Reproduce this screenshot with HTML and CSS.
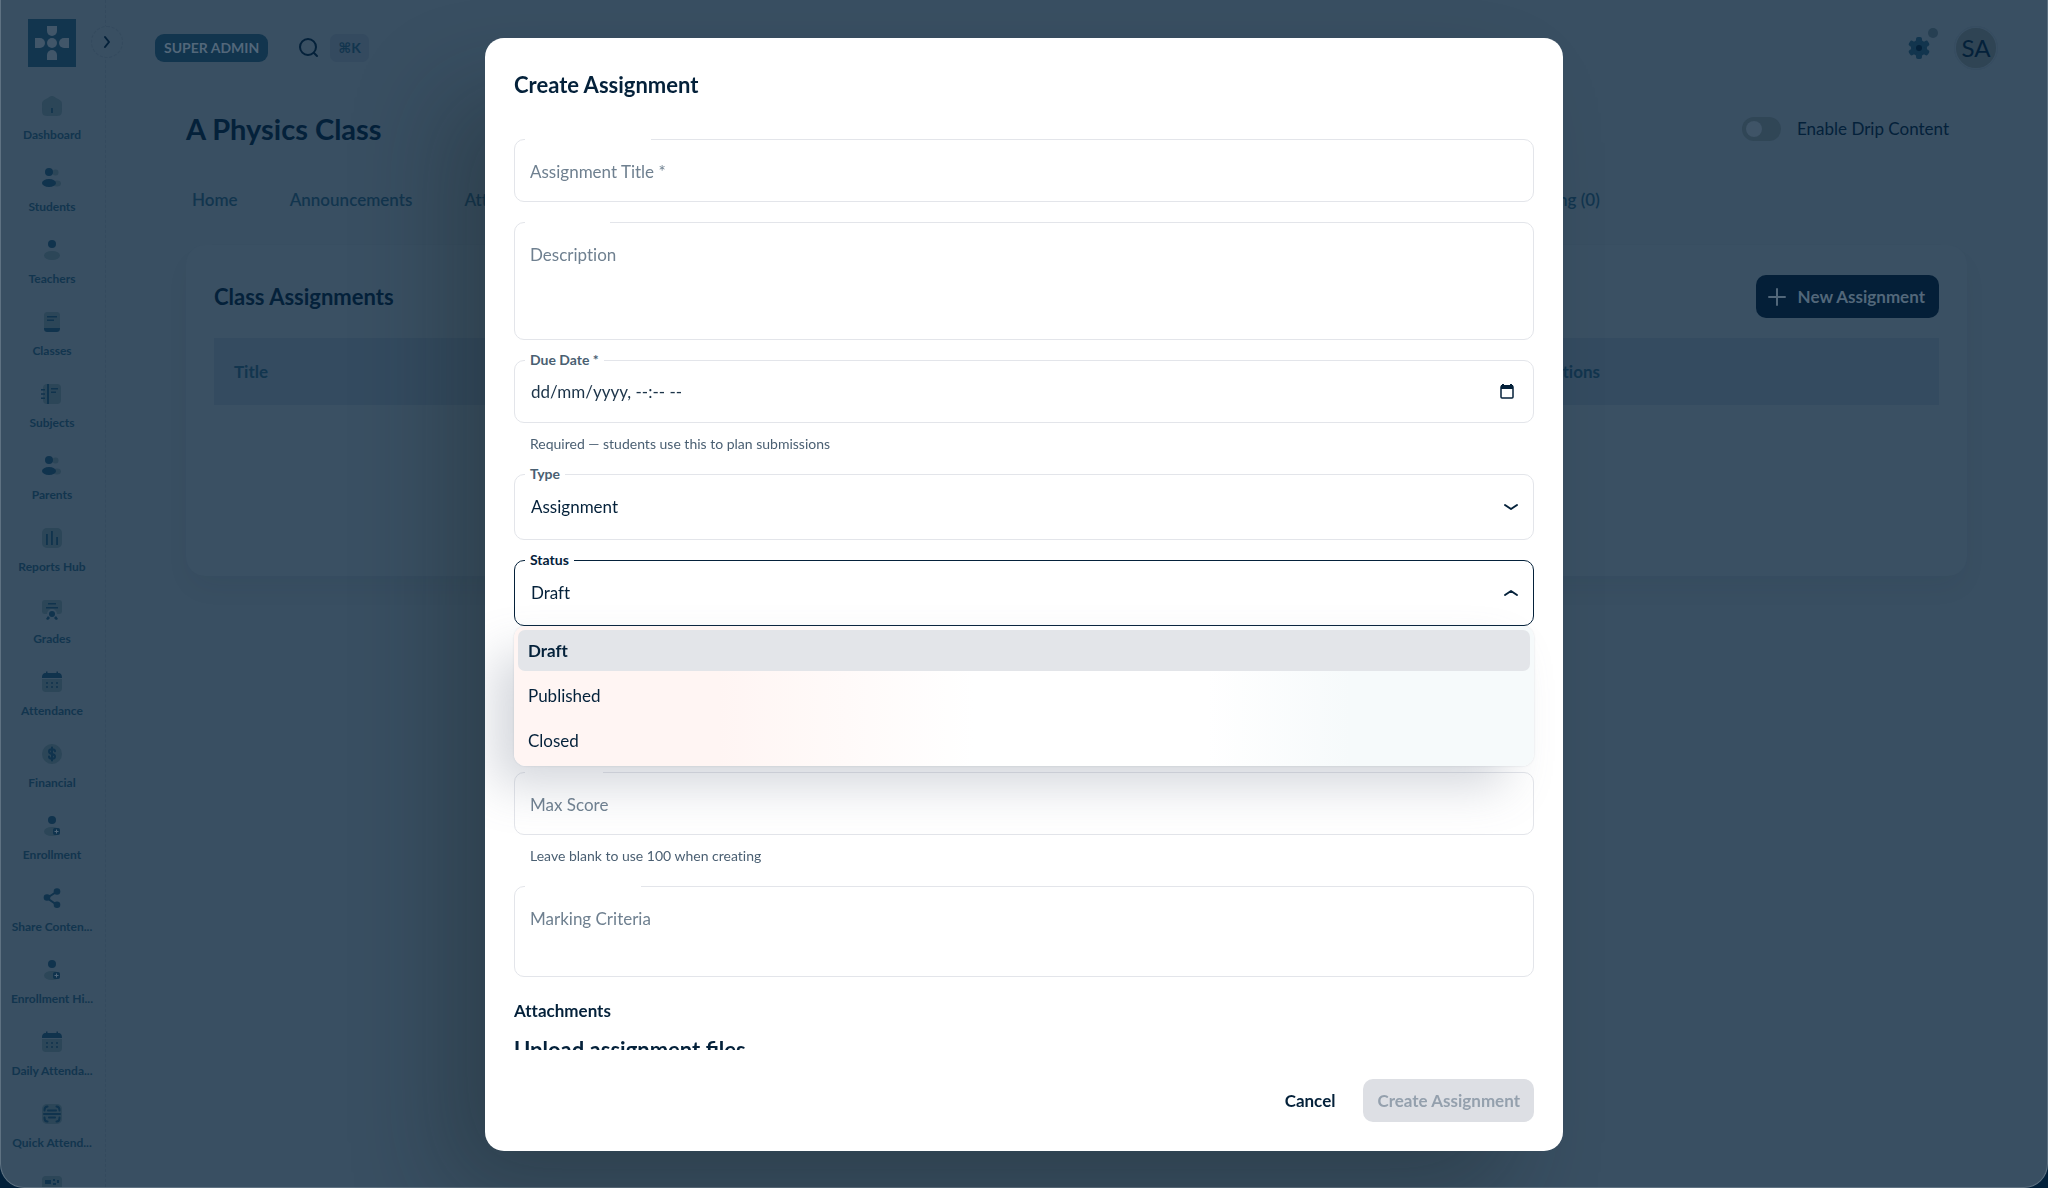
FILE: index.html
```html
<!DOCTYPE html>
<html lang="en">
<head>
    <meta charset="UTF-8">
    <meta name="viewport" content="width=device-width, initial-scale=1.0">
    <title>A Physics Class</title>
    <link rel="stylesheet" href="styles.css">
</head>
<body>
    <div class="app">
        <!-- Sidebar -->
        <aside class="sidebar">
            <a class="logo" href="#" aria-label="Home page">
                <svg viewBox="0 0 48 48" width="48" height="48">
                    <rect width="48" height="48" fill="#12354e"/>
                    <g fill="#415669">
                        <circle cx="24" cy="24" r="5"/>
                        <path d="M19 7h10v5a5 5 0 0 1-10 0z"/>
                        <path d="M19 41h10v-5a5 5 0 0 0-10 0z"/>
                        <path d="M7 19h5a5 5 0 0 1 0 10H7z"/>
                        <path d="M41 19h-5a5 5 0 0 0 0 10h5z"/>
                    </g>
                </svg>
            </a>
            <button class="collapse" type="button" aria-label="Expand sidebar">
                <svg viewBox="0 0 16 16" width="16" height="16"><path d="M6 3l4 5-4 5" fill="none" stroke="#04213a" stroke-width="2" stroke-linecap="round" stroke-linejoin="round"/></svg>
            </button>
            <nav class="side-nav">
                <a href="#"><svg viewBox="0 0 24 24"><path class="soft" d="M2 12.2c0-2.3 0-3.4.5-4.4.5-.9 1.5-1.500 3.400-2.700l2-1.200C9.900 2.600 10.900 2 12 2s2.100.6 4.100 1.900l2 1.200c1.900 1.200 2.900 1.800 3.400 2.700.5 1 .5 2.100.5 4.400v1.500c0 3.900 0 5.900-1.200 7.100C19.700 22 17.800 22 14 22h-4c-3.800 0-5.700 0-6.800-1.200C2 19.600 2 17.600 2 13.700z"/><path class="solid" d="M11.200 14h1.600v5h-1.600z"/></svg><span>Dashboard</span></a>
                <a href="#"><svg viewBox="0 0 24 24"><circle class="soft" cx="15.500" cy="6.500" r="3"/><ellipse class="soft" cx="17" cy="17.500" rx="4" ry="3"/><circle class="solid" cx="9" cy="6" r="4"/><ellipse class="solid" cx="9" cy="17" rx="7" ry="4"/></svg><span>Students</span></a>
                <a href="#"><svg viewBox="0 0 24 24"><circle class="solid" cx="12" cy="6" r="4"/><ellipse class="soft" cx="12" cy="17.500" rx="8" ry="4.500"/></svg><span>Teachers</span></a>
                <a href="#"><svg viewBox="0 0 24 24"><path class="soft" d="M8 2h8c3 0 4 1 4 4v12H4V6c0-3 1-4 4-4z"/><path class="solid" d="M7 6h10v1.500H7zM7 9.500h7V11H7zM4 18h16c0 3-1 4-4 4H8c-3 0-4-1-4-4z"/></svg><span>Classes</span></a>
                <a href="#"><svg viewBox="0 0 24 24"><path class="soft" d="M9 2h7c4 0 5 1 5 5v10c0 4-1 5-5 5H9z"/><path class="soft" d="M3 6c0-3 2-4 4-4v20c-2 0-4-1-4-4z"/><path class="solid" d="M7 2h2v20H7zM1 7h4v1.500H1zM1 11.300h4v1.500H1zM1 15.600h4v1.500H1zM11 6h7v1.500h-7zM11 9.500h5V11h-5z"/></svg><span>Subjects</span></a>
                <a href="#"><svg viewBox="0 0 24 24"><circle class="soft" cx="15.500" cy="6.500" r="3"/><ellipse class="soft" cx="17" cy="17.500" rx="4" ry="3"/><circle class="solid" cx="9" cy="6" r="4"/><ellipse class="solid" cx="9" cy="17" rx="7" ry="4"/></svg><span>Parents</span></a>
                <a href="#"><svg viewBox="0 0 24 24"><rect class="soft" x="2" y="2" width="20" height="20" rx="5"/><path class="solid" d="M6 8h1.800v11H6zM11 5h1.800v14H11zM16.200 11H18v8h-1.800z"/></svg><span>Reports Hub</span></a>
                <a href="#"><svg viewBox="0 0 24 24"><path class="soft" d="M5 2h14c2 0 3 1 3 3v8c0 2-1 3-3 3h-2a5 5 0 0 0-10 0H5c-2 0-3-1-3-3V5c0-2 1-3 3-3z"/><path class="solid" d="M8 5h8v1.500H8zM6 9h12v1.500H6z"/><circle class="solid" cx="12" cy="16" r="3"/><path class="solid" d="M8 18l2 2-2 2-2-1zM16 18l-2 2 2 2 2-1z"/></svg><span>Grades</span></a>
                <a href="#"><svg viewBox="0 0 24 24"><path class="soft" d="M2 9h20v8c0 4-1 5-5 5H7c-4 0-5-1-5-5z"/><path class="solid" d="M6 1.500h1.500V3h9V1.500H18V3c3 0 4 1.500 4 5H2c0-3.500 1-5 4-5z"/><g class="solid"><circle cx="7" cy="13" r="1"/><circle cx="12" cy="13" r="1"/><circle cx="17" cy="13" r="1"/><circle cx="7" cy="17" r="1"/><circle cx="12" cy="17" r="1"/><circle cx="17" cy="17" r="1"/></g></svg><span>Attendance</span></a>
                <a href="#"><svg viewBox="0 0 24 24"><circle class="soft" cx="12" cy="12" r="10"/><path class="line" d="M12 5.500v13M15 9.300C15 8 13.700 7.300 12 7.300S9 8 9 9.500s1 2 3 2.500 3 1 3 2.500-1.300 2.300-3 2.300-3-.8-3-2.300"/></svg><span>Financial</span></a>
                <a href="#"><svg viewBox="0 0 24 24"><circle class="solid" cx="12" cy="6" r="4"/><ellipse class="soft" cx="12" cy="17.500" rx="8" ry="4.500"/><rect class="solid" x="13" y="14" width="7" height="7" rx="2"/><path class="plus" d="M16.500 15.500v4M14.500 17.500h4"/></svg><span>Enrollment</span></a>
                <a href="#"><svg viewBox="0 0 24 24"><path class="line" d="M17 5.500L7 12l10 7"/><circle class="solid" cx="17" cy="5.500" r="3.300"/><circle class="solid" cx="7" cy="11.500" r="3.300"/><circle class="solid" cx="17" cy="18.800" r="3.300"/></svg><span>Share Conten...</span></a>
                <a href="#"><svg viewBox="0 0 24 24"><circle class="solid" cx="12" cy="6" r="4"/><ellipse class="soft" cx="12" cy="17.500" rx="8" ry="4.500"/><rect class="solid" x="13" y="14" width="7" height="7" rx="2"/><path class="plus" d="M16.500 15.500v4M14.500 17.500h4"/></svg><span>Enrollment Hi...</span></a>
                <a href="#"><svg viewBox="0 0 24 24"><path class="soft" d="M2 9h20v8c0 4-1 5-5 5H7c-4 0-5-1-5-5z"/><path class="solid" d="M6 1.500h1.500V3h9V1.500H18V3c3 0 4 1.500 4 5H2c0-3.500 1-5 4-5z"/><g class="solid"><circle cx="7" cy="13" r="1"/><circle cx="12" cy="13" r="1"/><circle cx="17" cy="13" r="1"/><circle cx="7" cy="17" r="1"/><circle cx="12" cy="17" r="1"/><circle cx="17" cy="17" r="1"/></g></svg><span>Daily Attenda...</span></a>
                <a href="#"><svg viewBox="0 0 24 24"><rect class="soft" x="2" y="2" width="20" height="20" rx="5"/><path class="line" d="M4 12h16M4.500 8.500V8c0-2 1-3.500 3-3.500M19.500 8.500V8c0-2-1-3.500-3-3.500M4.500 15.500v.5c0 2 1 3.500 3 3.500M19.500 15.500v.5c0 2-1 3.500-3 3.500M8 8.500h8M9 15.500h6"/></svg><span>Quick Attend...</span></a>
                <a href="#" aria-label="More"><svg viewBox="0 0 24 24"><rect class="soft" x="2" y="2" width="20" height="20" rx="4"/><path class="solid" d="M5 6h6v4H5zM13 5h2v2h-2zM17 6h2v3h-2zM13 9h3v2h-3z"/></svg></a>
            </nav>
        </aside>

        <div class="page">
            <header class="topbar">
                <span class="role">SUPER ADMIN</span>
                <button class="search" type="button">
                    <svg viewBox="0 0 24 24" width="24" height="24"><g fill="none" stroke="#04213a" stroke-width="2" stroke-linecap="round"><circle cx="11" cy="11" r="8"/><path d="M17 17l3 3"/></g></svg>
                    <kbd>⌘K</kbd>
                </button>
                <button class="settings" type="button" aria-label="Settings">
                    <svg viewBox="0 0 24 24" width="24" height="24"><g fill="#12354e"><circle cx="12" cy="12" r="8"/><rect x="9" y="1" width="6" height="22" rx="2"/><rect x="9" y="1" width="6" height="22" rx="2" transform="rotate(60 12 12)"/><rect x="9" y="1" width="6" height="22" rx="2" transform="rotate(120 12 12)"/></g><circle cx="12" cy="12" r="3" fill="#04213a"/></svg>
                    <i class="dot"></i>
                </button>
                <button class="avatar" type="button">SA</button>
            </header>

            <main>
                <div class="heading">
                    <h1>A Physics Class</h1>
                    <label class="drip"><input type="checkbox">Enable Drip Content</label>
                </div>

                <nav class="tabs">
                    <a href="#">Home</a>
                    <a href="#">Announcements</a>
                    <a href="#">Attendance</a>
                    <a href="#">Marking (0)</a>
                </nav>

                <section class="card">
                    <div class="card-head">
                        <h2>Class Assignments</h2>
                        <button class="new-btn" type="button">
                            <svg viewBox="0 0 18 18" width="18" height="18"><path d="M9 1v16M1 9h16" stroke="#52677a" stroke-width="2" stroke-linecap="round"/></svg>
                            New Assignment
                        </button>
                    </div>
                    <table>
                        <thead>
                            <tr><th>Title</th><th class="actions">Actions</th><th class="spacer"></th></tr>
                        </thead>
                    </table>
                </section>
            </main>
        </div>
    </div>

    <!-- Create assignment dialog -->
    <div class="overlay">
        <form class="dialog" role="dialog" aria-labelledby="dialogTitle">
            <h2 id="dialogTitle">Create Assignment</h2>
            <div class="dialog-body">
                <div class="field empty">
                    <i class="notch notch-title"></i>
                    <label for="title">Assignment Title *</label>
                    <input type="text" id="title">
                </div>
                <div class="field empty">
                    <i class="notch notch-description"></i>
                    <label for="description">Description</label>
                    <textarea id="description" class="tall"></textarea>
                </div>
                <div class="field">
                    <label for="dueDate">Due Date *</label>
                    <input type="text" id="dueDate" placeholder="dd/mm/yyyy, --:-- --">
                    <svg class="calendar" viewBox="0 0 16 16" width="16" height="16"><path d="M4 1v2M12 1v2" stroke="#04213a" stroke-width="2"/><rect x="2" y="3" width="12" height="12" rx="1" fill="none" stroke="#04213a" stroke-width="1.500"/><path d="M2 2h12v4H2z" fill="#04213a"/></svg>
                </div>
                <p class="helper">Required — students use this to plan submissions</p>
                <div class="field">
                    <label for="type">Type</label>
                    <select id="type"><option>Assignment</option></select>
                    <svg class="chevron" viewBox="0 0 16 16" width="16" height="16"><path d="M2 6l6 4 6-4"/></svg>
                </div>
                <div class="field open">
                    <label for="status">Status</label>
                    <select id="status"><option>Draft</option></select>
                    <svg class="chevron" viewBox="0 0 16 16" width="16" height="16"><path d="M2 10l6-4 6 4"/></svg>
                    <ul class="menu" role="listbox">
                        <li role="option" class="selected" aria-selected="true">Draft</li>
                        <li role="option">Published</li>
                        <li role="option">Closed</li>
                    </ul>
                </div>
                <div class="field empty">
                    <i class="notch notch-score"></i>
                    <label for="maxScore">Max Score</label>
                    <input type="text" id="maxScore">
                </div>
                <p class="helper">Leave blank to use 100 when creating</p>
                <div class="field empty">
                    <i class="notch notch-criteria"></i>
                    <label for="criteria">Marking Criteria</label>
                    <textarea id="criteria"></textarea>
                </div>
                <h3>Attachments</h3>
                <h4>Upload assignment files</h4>
            </div>
            <div class="dialog-actions">
                <button type="button" class="cancel">Cancel</button>
                <button type="submit" class="submit" disabled>Create Assignment</button>
            </div>
        </form>
    </div>
</body>
</html>
```
FILE: styles.css
```css
* {
    box-sizing: border-box;
}
body {
    margin: 0;
    background-color: #02203a;
    color: #04213a;
    font-family: Lato, "Open Sans", sans-serif;
    font-size: 17px;
    line-height: 24px;
    font-variant-ligatures: none;
}
h1, h2, h3, h4, p {
    margin: 0;
}
a {
    color: inherit;
    text-decoration: none;
}
button, input, textarea, select {
    font: inherit;
    color: inherit;
    border: none;
    background: none;
    padding: 0;
    margin: 0;
}
.app {
    display: flex;
    height: 100vh;
    overflow: hidden;
    background-color: #394f62;
    border: 1px solid #5f7282;
    border-top: none;
    border-radius: 0 0 24px 24px;
}

/* sidebar */
.sidebar {
    position: relative;
    flex: none;
    width: 105px;
    border-right: 1px dashed #344a5e;
}
.logo {
    display: block;
    width: 48px;
    height: 48px;
    margin: 19px auto 19px 27px;
}
.logo svg {
    display: block;
}
.collapse {
    position: absolute;
    top: 26px;
    right: -18px;
    width: 32px;
    height: 32px;
    border: 1px dashed #344a5e;
    border-radius: 50%;
    background-color: #394f62;
    display: flex;
    align-items: center;
    justify-content: center;
}
.side-nav {
    display: flex;
    flex-direction: column;
    margin-right: 2px;
}
.side-nav a {
    display: flex;
    flex: none;
    flex-direction: column;
    align-items: center;
    gap: 8px;
    height: 72px;
    padding-top: 8px;
    font-size: 12px;
    font-weight: bold;
    line-height: 18px;
    color: #12354e;
    white-space: nowrap;
}
.side-nav svg {
    width: 24px;
    height: 24px;
}
.soft {
    fill: #2c4658;
}
.solid {
    fill: #10334d;
}
.line {
    fill: none;
    stroke: #10334d;
    stroke-width: 2;
    stroke-linecap: round;
}
.plus {
    stroke: #52677a;
    stroke-width: 1;
}

/* top bar */
.page {
    flex: 1;
    min-width: 0;
}
.topbar {
    display: flex;
    align-items: center;
    height: 96px;
    padding: 0 49px;
}
.role {
    padding: 0 9px;
    border-radius: 9px;
    background-color: #12354e;
    color: #52677a;
    font-size: 14px;
    font-weight: bold;
    line-height: 28px;
}
.search {
    display: flex;
    align-items: center;
    gap: 9px;
    margin-left: 29px;
}
.search kbd {
    padding: 0 8px;
    border-radius: 7px;
    background-color: #344a5f;
    color: #12354e;
    font: bold 14px/28px Lato, "DejaVu Sans", sans-serif;
}
.settings {
    position: relative;
    display: flex;
    margin-left: auto;
    margin-right: 23px;
}
.dot {
    position: absolute;
    top: -8px;
    right: -7px;
    width: 10px;
    height: 10px;
    border-radius: 50%;
    background-color: #263f52;
}
.avatar {
    width: 44px;
    height: 44px;
    border: 2px solid #394f62;
    outline: 1px solid #364c60;
    outline-offset: -1px;
    border-radius: 50%;
    background-color: #2f4454;
    font-size: 24px;
}

/* class page */
main {
    padding: 0 80px;
}
.heading {
    display: flex;
    align-items: center;
    justify-content: space-between;
    height: 36px;
    margin-top: 15px;
    padding-right: 18px;
}
h1 {
    font-size: 29px;
    line-height: 36px;
}
.drip {
    display: flex;
    align-items: center;
    gap: 16px;
}
.drip input {
    appearance: none;
    width: 39px;
    height: 24px;
    padding: 4px;
    border-radius: 12px;
    background-color: #304656;
}
.drip input::before {
    content: "";
    display: block;
    width: 16px;
    height: 16px;
    border-radius: 50%;
    background-color: #3f5467;
}
.tabs {
    display: flex;
    align-items: center;
    gap: 52px;
    width: 80%;
    height: 58px;
    margin-top: 24px;
    padding-left: 6px;
    padding-right: 11px;
    font-weight: 600;
    color: #12354e;
}
.tabs a:last-child {
    margin-left: auto;
}
.card {
    min-height: 331px;
    margin-top: 16px;
    padding: 30px 28px 28px;
    border-radius: 19px;
    background-color: #3a5063;
    box-shadow: 0 14px 28px -5px rgba(4, 33, 58, 0.06);
}
.card-head {
    display: flex;
    align-items: center;
    justify-content: space-between;
    margin-bottom: 20px;
}
.card h2, .dialog h2, .dialog h4 {
    font-size: 22px;
    line-height: 32px;
}
.new-btn {
    display: flex;
    align-items: center;
    gap: 12px;
    height: 43px;
    padding: 0 14px 0 12px;
    border-radius: 10px;
    background-color: #041f38;
    color: #52677a;
    font-weight: bold;
}
table {
    width: 100%;
    border-collapse: collapse;
    background-color: #344b60;
}
th {
    height: 67px;
    padding: 0 20px;
    text-align: left;
    font-weight: bold;
    color: #12354e;
}
.actions {
    text-align: right;
}
.spacer {
    width: 319px;
}

/* dialog */
.overlay {
    position: fixed;
    inset: 0;
    display: flex;
    justify-content: center;
    padding: 38px 24px 37px;
}
.dialog {
    display: flex;
    flex-direction: column;
    width: 100%;
    max-width: 1078px;
    border-radius: 19px;
    background-color: #fff;
    box-shadow: -48px 48px 96px -10px rgba(20, 30, 30, 0.3);
}
.dialog h2 {
    padding: 31px 29px 29px;
}
.dialog-body {
    flex: 1;
    min-height: 0;
    overflow: hidden;
    padding: 9px 29px 0;
}
.field {
    position: relative;
    display: flex;
    margin-bottom: 20px;
}
.field input, .field textarea, .field select {
    width: 100%;
    height: 63px;
    padding: 0 16px;
    border: 1px solid #e3e5ea;
    border-radius: 10px;
    background-color: transparent;
    outline: none;
    resize: none;
    appearance: none;
}
.field select {
    height: 66px;
}
.field textarea {
    height: 91px;
    padding: 20px 16px;
}
.field .tall {
    height: 118px;
}
.field input::placeholder {
    color: #1c3449;
    opacity: 1;
}
.field label {
    position: absolute;
    top: -10px;
    left: 11px;
    padding: 0 5px;
    background-color: #fff;
    color: #4a5f72;
    font-size: 14px;
    font-weight: bold;
    line-height: 20px;
}
.field.empty label {
    top: 21px;
    background: none;
    color: #6f8090;
    font-size: 17px;
    font-weight: 400;
    line-height: 24px;
}
.notch {
    position: absolute;
    top: 0;
    left: 11px;
    height: 1px;
    background-color: #fff;
}
.notch-title {
    width: 126px;
}
.notch-description {
    width: 85px;
}
.notch-score {
    width: 78px;
}
.notch-criteria {
    width: 116px;
}
.helper {
    margin: -9px 16px 20px;
    color: #4a5f72;
    font-size: 14px;
    line-height: 20px;
}
.calendar {
    position: absolute;
    top: 23px;
    right: 19px;
}
.chevron {
    position: absolute;
    top: 25px;
    right: 15px;
    fill: none;
    stroke: #04213a;
    stroke-width: 2;
    stroke-linecap: round;
    stroke-linejoin: round;
}
.field.open {
    z-index: 1;
    margin-bottom: 146px;
}
.field.open select {
    border-color: #04213a;
}
.field.open label {
    color: #04213a;
}
.menu {
    position: absolute;
    top: 100%;
    left: 0;
    right: 0;
    display: flex;
    flex-direction: column;
    gap: 4px;
    margin: 0;
    padding: 4px 4px 5px;
    list-style: none;
    border-radius: 12px;
    background: linear-gradient(90deg, #fff5f3 20%, #fff 45%, #fff 68%, #f6fafb 82%);
    box-shadow: 0 0 2px rgba(110, 120, 140, 0.24), -24px 24px 48px -5px rgba(110, 120, 140, 0.3);
}
.menu li {
    padding: 0 10px;
    border-radius: 7px;
    line-height: 41px;
}
.menu .selected {
    background-color: #e3e5e9;
    font-weight: bold;
}
.dialog h3 {
    margin-top: 22px;
    font-size: 17px;
    line-height: 24px;
}
.dialog h4 {
    margin-top: 11px;
    font-variant-ligatures: normal;
}
.dialog-actions {
    display: flex;
    justify-content: flex-end;
    gap: 14px;
    padding: 29px;
}
.dialog-actions button {
    height: 43px;
    padding: 0 14px;
    border-radius: 10px;
    font-weight: bold;
}
.submit {
    background-color: #dddfe4;
    color: #94a0ad;
}
```
